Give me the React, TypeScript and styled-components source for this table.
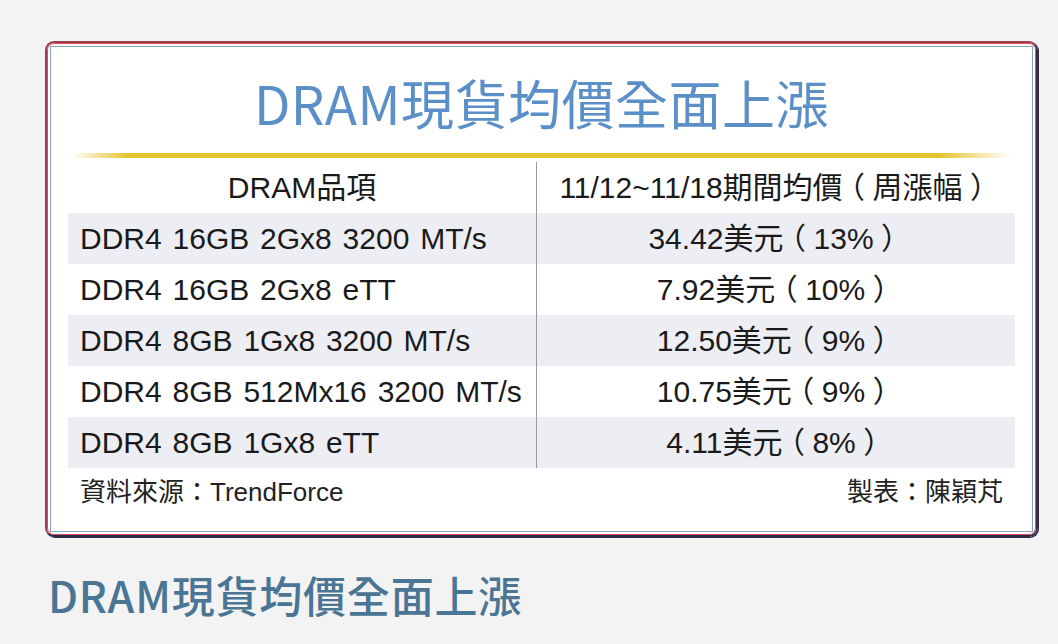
import styled, { createGlobalStyle } from 'styled-components';

const GlobalStyle = createGlobalStyle`
  body {
    margin: 0;
    background: #f3f3f3;
    font-family: 'Liberation Sans', 'Noto Sans CJK TC', sans-serif;
  }
`;

const rows = [
  { item: 'DDR4 16GB 2Gx8 3200 MT/s', price: '34.42', pct: '13%' },
  { item: 'DDR4 16GB 2Gx8 eTT', price: '7.92', pct: '10%' },
  { item: 'DDR4 8GB 1Gx8 3200 MT/s', price: '12.50', pct: '9%' },
  { item: 'DDR4 8GB 512Mx16 3200 MT/s', price: '10.75', pct: '9%' },
  { item: 'DDR4 8GB 1Gx8 eTT', price: '4.11', pct: '8%' },
];

const App = () => {
  return (
    <>
      <GlobalStyle />
      <Page>
        <Frame>
          <Ring>
            <Panel>
              <Title>DRAM現貨均價全面上漲</Title>
              <GoldLine />
              <Table>
                <Cell $left>DRAM品項</Cell>
                <Cell>
                  11/12~11/18期間均價<Paren>（</Paren>周漲幅<Paren>）</Paren>
                </Cell>
                {rows.map((r, i) => (
                  <Row key={r.item} $shaded={i % 2 === 0}>
                    <Cell $left $align='left'>
                      {r.item}
                    </Cell>
                    <Cell>
                      {r.price}美元<Paren>（</Paren>
                      {r.pct}
                      <Paren>）</Paren>
                    </Cell>
                  </Row>
                ))}
              </Table>
              <Footer>
                <span>資料來源：TrendForce</span>
                <span>製表：陳穎芃</span>
              </Footer>
            </Panel>
          </Ring>
        </Frame>
        <Caption>DRAM現貨均價全面上漲</Caption>
      </Page>
    </>
  );
};

const Page = styled.div`
  padding: 41px 20px 0 45px;
`;

const Frame = styled.div`
  border: 2px solid;
  border-color: #9b3e4e #3a2d48 #2c2a44 #9b3e4e;
  border-radius: 9px;
  box-shadow: 1px 1px 0 #2a2c42;
`;

const Ring = styled.div`
  border: 1px solid #df4a5c;
  border-radius: 7px;
  padding: 2px;
  background: #fff;
`;

const Panel = styled.div`
  border: 1px solid #8aa3bf;
  background: #fff;
  padding: 0 17px 21px;
`;

const Title = styled.h1`
  margin: 0;
  padding-top: 24px;
  height: 62px;
  line-height: 62px;
  text-align: center;
  font-family: 'Noto Sans CJK TC', sans-serif;
  font-weight: 400;
  font-size: 53px;
  letter-spacing: 0.5px;
  color: #5a8fc8;
`;

const GoldLine = styled.div`
  margin: 20px 3px 0 4px;
  height: 5px;
  background: linear-gradient(
    to right,
    rgba(232, 195, 44, 0) 0%,
    #e6c22c 6%,
    #e6c22c 92%,
    rgba(232, 195, 44, 0) 100%
  );
`;

const Table = styled.div`
  margin-top: 4px;
  display: grid;
  grid-template-columns: 469px 1fr;
  color: #1a1a1a;
  font-size: 30px;
`;

const Row = styled.div<{ $shaded?: boolean }>`
  display: contents;
  & > div {
    background: ${(p) => (p.$shaded ? '#eceef3' : '#fff')};
  }
`;

const Cell = styled.div<{ $left?: boolean; $align?: string }>`
  height: 51px;
  line-height: 51px;
  padding: 0 12px;
  text-align: ${(p) => p.$align || 'center'};
  white-space: nowrap;
  word-spacing: ${(p) => (p.$align === 'left' ? '2.5px' : '0')};
  border-right: ${(p) => (p.$left ? '1px solid #9a9a9a' : 'none')};
  box-sizing: border-box;
`;

const Paren = styled.span`
  display: inline-block;
  width: 1em;
  text-align: center;
  font-feature-settings: 'halt';
`;

const Footer = styled.div`
  display: flex;
  justify-content: space-between;
  padding: 6px 12px 0;
  line-height: 36px;
  font-size: 26px;
  color: #222;
`;

const Caption = styled.div`
  margin: 32px 0 0 3px;
  line-height: 50px;
  font-family: 'Noto Sans CJK TC', sans-serif;
  font-weight: 500;
  font-size: 43px;
  letter-spacing: 0.8px;
  color: #4a7595;
`;

export default App;
